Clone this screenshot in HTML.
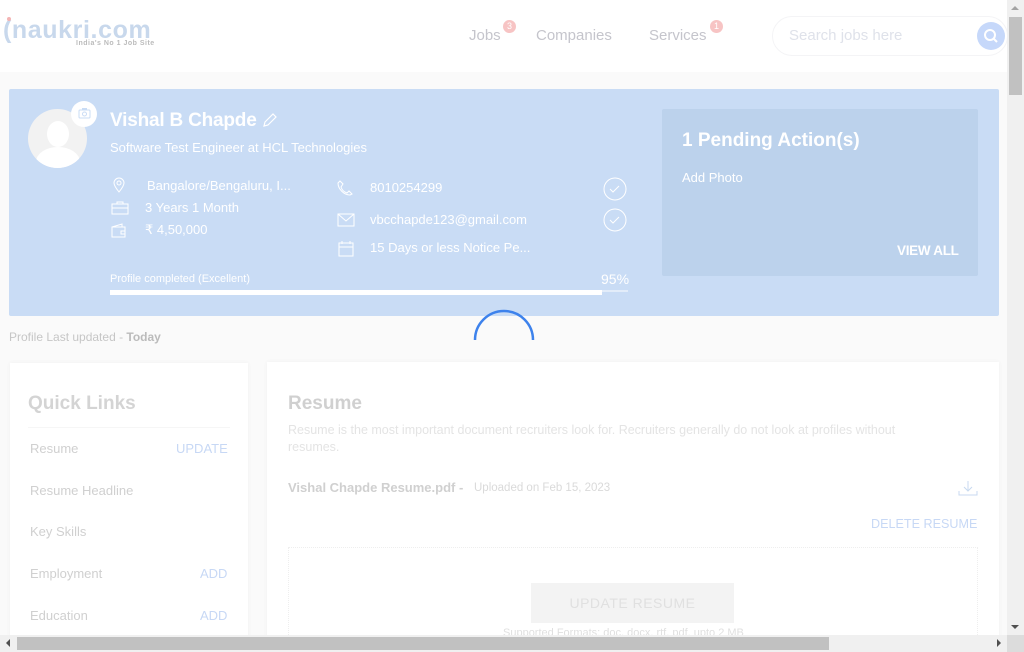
<!DOCTYPE html>
<html><head><meta charset="utf-8"><style>
*{margin:0;padding:0;box-sizing:border-box}
body{width:1024px;height:652px;overflow:hidden;background:#fafafa;font-family:"Liberation Sans",sans-serif;position:relative}
.a{position:absolute;white-space:nowrap}
.w{color:#fff}
</style></head><body>
<div class="a" style="left:0;top:0;width:1007px;height:72px;background:#fff"></div>
<div class="a" style="left:3px;top:16px;font-size:25px;font-weight:bold;color:#c8d8ec;letter-spacing:0.6px">(naukri.com</div>
<div class="a" style="left:7px;top:17px;width:4px;height:4px;border-radius:50%;background:#f4b4b4"></div>
<div class="a" style="left:76px;top:40px;font-size:7px;font-weight:bold;color:#bbb;letter-spacing:0.5px">India's No 1 Job Site</div>
<div class="a" style="left:469px;top:27px;font-size:15px;color:#c5c5cc">Jobs</div>
<div class="a" style="left:503px;top:20px;width:13px;height:13px;border-radius:50%;background:#f7c4c4;color:#fff;font-size:9px;text-align:center;line-height:13px">3</div>
<div class="a" style="left:536px;top:27px;font-size:15px;color:#c5c5cc">Companies</div>
<div class="a" style="left:649px;top:27px;font-size:15px;color:#c5c5cc">Services</div>
<div class="a" style="left:710px;top:20px;width:13px;height:13px;border-radius:50%;background:#f7c4c4;color:#fff;font-size:9px;text-align:center;line-height:13px">1</div>
<div class="a" style="left:772px;top:16px;width:236px;height:40px;border-radius:20px;border:1px solid #f4f4f6;background:#fff"></div>
<div class="a" style="left:789px;top:27px;font-size:15px;color:#dfe2ea">Search jobs here</div>
<div class="a" style="left:977px;top:22px;width:28px;height:28px;border-radius:50%;background:#c6d8fa"></div>
<svg class="a" style="left:983px;top:28px" width="16" height="16"><circle cx="7" cy="7" r="5" fill="none" stroke="#fff" stroke-width="2"/><line x1="11" y1="11" x2="14" y2="14" stroke="#fff" stroke-width="2"/></svg>

<div class="a" style="left:9px;top:89px;width:990px;height:227px;background:#c9dcf5;border-radius:2px"></div>
<div class="a" style="left:28px;top:109px;width:59px;height:59px;border-radius:50%;background:#f2f2f2;overflow:hidden">
<div class="a" style="left:19px;top:12px;width:22px;height:26px;border-radius:50%;background:#fff"></div>
<div class="a" style="left:8px;top:38px;width:44px;height:30px;border-radius:50%;background:#fff"></div></div>
<div class="a" style="left:71px;top:101px;width:26px;height:26px;border-radius:50%;background:#fff"></div>
<svg class="a" style="left:78px;top:107px" width="13" height="12"><rect x="1" y="3" width="11" height="8" rx="1" fill="none" stroke="#c9dcf5"/><circle cx="6.5" cy="7" r="2" fill="none" stroke="#c9dcf5"/><rect x="4" y="1" width="5" height="2" fill="#c9dcf5"/></svg>
<div class="a w" style="left:110px;top:110px;font-size:19px;font-weight:bold;letter-spacing:-0.2px">Vishal B Chapde</div>
<svg class="a" style="left:262px;top:112px" width="16" height="16"><path d="M2 14 L3 10 L11 2 L14 5 L6 13 Z" fill="none" stroke="#fff" stroke-width="1.2"/></svg>
<div class="a w" style="left:110px;top:140px;font-size:13px">Software Test Engineer at HCL Technologies</div>
<svg class="a" style="left:112px;top:177px" width="14" height="16"><path d="M7 15 C3 10 2 8 2 6 A5 5 0 0 1 12 6 C12 8 11 10 7 15Z" fill="none" stroke="#fff"/><circle cx="7" cy="6" r="2" fill="none" stroke="#fff"/></svg>
<div class="a w" style="left:147px;top:178px;font-size:13px">Bangalore/Bengaluru, I...</div>
<svg class="a" style="left:111px;top:201px" width="18" height="14"><rect x="1" y="3" width="16" height="10" fill="none" stroke="#fff"/><line x1="1" y1="7" x2="17" y2="7" stroke="#fff"/><rect x="6" y="1" width="6" height="2" fill="none" stroke="#fff"/></svg>
<div class="a w" style="left:145px;top:200px;font-size:13px">3 Years 1 Month</div>
<svg class="a" style="left:111px;top:223px" width="16" height="15"><path d="M1 4 L11 1 L11 4 M1 4 H14 V14 H1Z M10 8 H14 V11 H10Z" fill="none" stroke="#fff"/></svg>
<div class="a w" style="left:145px;top:222px;font-size:13px">₹ 4,50,000</div>
<svg class="a" style="left:337px;top:180px" width="16" height="16"><path d="M3 1 L6 4 L4 7 C5 10 7 12 10 13 L12 11 L15 14 L13 15 C7 15 1 9 1 3Z" fill="none" stroke="#fff"/></svg>
<div class="a w" style="left:370px;top:180px;font-size:13px">8010254299</div>
<svg class="a" style="left:337px;top:213px" width="18" height="14"><rect x="1" y="1" width="16" height="12" fill="none" stroke="#fff"/><path d="M1 1 L9 8 L17 1" fill="none" stroke="#fff"/></svg>
<div class="a w" style="left:370px;top:212px;font-size:13px">vbcchapde123@gmail.com</div>
<svg class="a" style="left:338px;top:240px" width="16" height="17"><rect x="1" y="3" width="14" height="13" fill="none" stroke="#fff"/><line x1="1" y1="7" x2="15" y2="7" stroke="#fff"/><line x1="4" y1="1" x2="4" y2="4" stroke="#fff"/><line x1="12" y1="1" x2="12" y2="4" stroke="#fff"/></svg>
<div class="a w" style="left:370px;top:240px;font-size:13px">15 Days or less Notice Pe...</div>
<svg class="a" style="left:602px;top:177px" width="26" height="56"><circle cx="13" cy="12" r="11" fill="none" stroke="#fff"/><path d="M8 12 L11 15 L17 9" fill="none" stroke="#fff"/><circle cx="13" cy="43" r="11" fill="none" stroke="#fff"/><path d="M8 43 L11 46 L17 40" fill="none" stroke="#fff"/></svg>
<div class="a w" style="left:110px;top:273px;font-size:11px">Profile completed (Excellent)</div>
<div class="a w" style="left:601px;top:271px;font-size:14px">95%</div>
<div class="a" style="left:110px;top:290px;width:518px;height:2px;background:#e2ecf9"></div>
<div class="a" style="left:110px;top:290px;width:492px;height:5px;background:#fff"></div>
<div class="a" style="left:662px;top:109px;width:316px;height:167px;background:#bcd2ec;border-radius:2px"></div>
<div class="a w" style="left:682px;top:130px;font-size:19px;font-weight:bold">1 Pending Action(s)</div>
<div class="a w" style="left:682px;top:170px;font-size:13px">Add Photo</div>
<div class="a w" style="left:897px;top:243px;font-size:13.5px;font-weight:bold;letter-spacing:-0.3px">VIEW ALL</div>
<svg class="a" style="left:470px;top:298px" width="68" height="46"><path d="M5 42 A29 29 0 0 1 63 42" fill="none" stroke="#3d82ec" stroke-width="2.5" transform="translate(0,0)"/></svg>
<div class="a" style="left:9px;top:330px;font-size:12px;color:#c6c6c6">Profile Last updated - <b style="color:#bbb">Today</b></div>

<div class="a" style="left:10px;top:363px;width:238px;height:280px;background:#fff;box-shadow:0 0 4px #f0f0f0"></div>
<div class="a" style="left:28px;top:393px;font-size:19px;font-weight:bold;color:#d4d4d4">Quick Links</div>
<div class="a" style="left:28px;top:427px;width:202px;height:1px;background:#f6f6f6"></div>
<div class="a" style="left:30px;top:441px;font-size:13px;color:#d0d0d0">Resume</div>
<div class="a" style="left:176px;top:441px;font-size:13px;color:#c7d8f5">UPDATE</div>
<div class="a" style="left:30px;top:483px;font-size:13px;color:#d0d0d0">Resume Headline</div>
<div class="a" style="left:30px;top:524px;font-size:13px;color:#d0d0d0">Key Skills</div>
<div class="a" style="left:30px;top:566px;font-size:13px;color:#d0d0d0">Employment</div>
<div class="a" style="left:200px;top:566px;font-size:13px;color:#c7d8f5">ADD</div>
<div class="a" style="left:30px;top:608px;font-size:13px;color:#d0d0d0">Education</div>
<div class="a" style="left:200px;top:608px;font-size:13px;color:#c7d8f5">ADD</div>

<div class="a" style="left:267px;top:362px;width:732px;height:280px;background:#fff;box-shadow:0 0 4px #f0f0f0"></div>
<div class="a" style="left:288px;top:393px;font-size:19px;font-weight:bold;color:#d0d0d0">Resume</div>
<div class="a" style="left:288px;top:422px;font-size:12.5px;color:#e4e4e4;line-height:17px">Resume is the most important document recruiters look for. Recruiters generally do not look at profiles without<br>resumes.</div>
<div class="a" style="left:288px;top:480px;font-size:13px;font-weight:bold;color:#d0d0d0">Vishal Chapde Resume.pdf -</div>
<div class="a" style="left:474px;top:482px;font-size:11.5px;color:#dadada">Uploaded on Feb 15, 2023</div>
<svg class="a" style="left:958px;top:480px" width="20" height="17"><path d="M10 1 V11 M6 7 L10 11 L14 7 M1 11 V15 H19 V11" fill="none" stroke="#c8daf0"/></svg>
<div class="a" style="left:871px;top:517px;font-size:12.6px;color:#c7d8f5">DELETE RESUME</div>
<div class="a" style="left:288px;top:547px;width:690px;height:100px;border:1px dotted #eee"></div>
<div class="a" style="left:531px;top:583px;width:203px;height:40px;background:#f3f3f3;color:#e0e0e0;font-size:14px;text-align:center;line-height:40px;letter-spacing:0.5px">UPDATE RESUME</div>
<div class="a" style="left:503px;top:627px;font-size:11px;color:#e0e0e0">Supported Formats: doc, docx, rtf, pdf, upto 2 MB</div>

<div class="a" style="left:1007px;top:0;width:17px;height:652px;background:#f0f0f0"></div>
<div class="a" style="left:1009px;top:17px;width:13px;height:78px;background:#c1c1c1"></div>
<div class="a" style="left:1011px;top:6px;width:0;height:0;border-left:4px solid transparent;border-right:4px solid transparent;border-bottom:4px solid #a3a3a3"></div>
<div class="a" style="left:1011px;top:625px;width:0;height:0;border-left:4px solid transparent;border-right:4px solid transparent;border-top:4px solid #505050"></div>
<div class="a" style="left:0;top:635px;width:1007px;height:17px;background:#f0f0f0"></div>
<div class="a" style="left:17px;top:637px;width:812px;height:13px;background:#c1c1c1"></div>
<div class="a" style="left:6px;top:639px;width:0;height:0;border-top:4px solid transparent;border-bottom:4px solid transparent;border-right:4px solid #505050"></div>
<div class="a" style="left:997px;top:639px;width:0;height:0;border-top:4px solid transparent;border-bottom:4px solid transparent;border-left:4px solid #505050"></div>
<div class="a" style="left:1007px;top:635px;width:17px;height:17px;background:#dcdcdc"></div>
</body></html>
